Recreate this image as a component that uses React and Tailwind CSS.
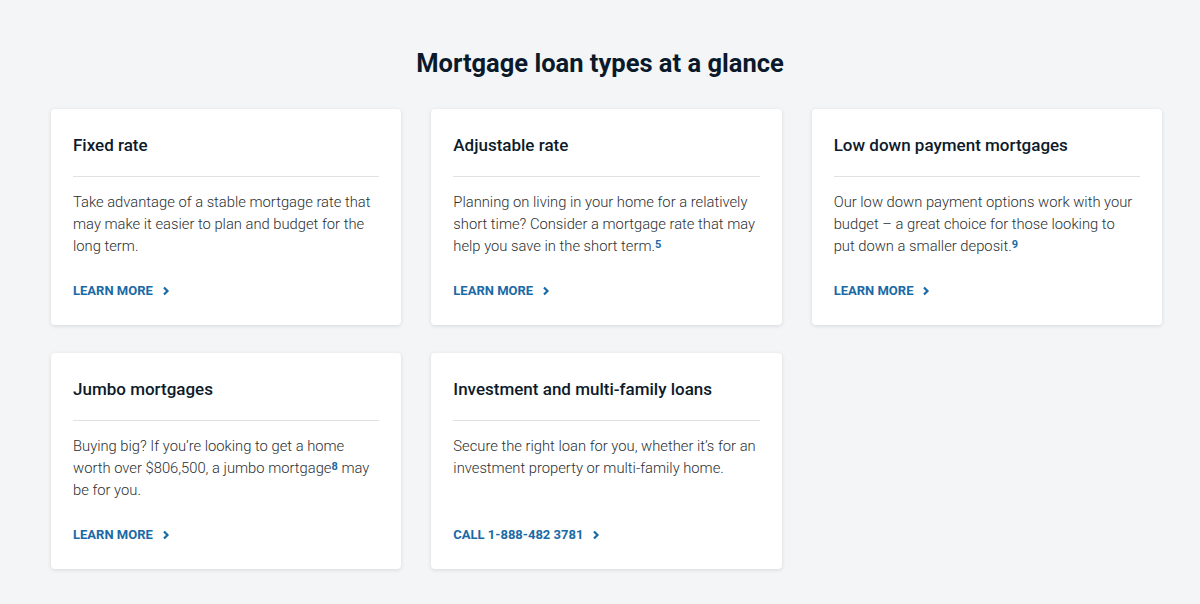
const LOANS = [
  {
    title: 'Fixed rate',
    body: 'Take advantage of a stable mortgage rate that may make it easier to plan and budget for the long term.',
    link: 'LEARN MORE',
  },
  {
    title: 'Adjustable rate',
    body: 'Planning on living in your home for a relatively short time? Consider a mortgage rate that may help you save in the short term.',
    sup: '5',
    link: 'LEARN MORE',
  },
  {
    title: 'Low down payment mortgages',
    body: 'Our low down payment options work with your budget \u2013 a great choice for those looking to put down a smaller deposit.',
    sup: '9',
    link: 'LEARN MORE',
  },
  {
    title: 'Jumbo mortgages',
    body: (
      <>
        Buying big? If you’re looking to get a home worth over $806,500, a jumbo mortgage
        <sup className="text-[11px] font-bold text-[#1a6aa6] relative -top-[3px] leading-none">8</sup> may be for you.
      </>
    ),
    link: 'LEARN MORE',
  },
  {
    title: 'Investment and multi-family loans',
    body: 'Secure the right loan for you, whether it’s for an investment property or multi-family home.',
    link: 'CALL 1-888-482 3781',
  },
]

function Chevron() {
  return (
    <svg className="w-[10px] h-[10px] ml-[8px]" viewBox="0 0 10 10" fill="none" stroke="currentColor" strokeWidth={2.2}>
      <path d="M3 1.5L6.5 5L3 8.5" />
    </svg>
  )
}

function LoanCard({ loan }) {
  return (
    <div className="flex flex-col bg-white rounded-[4px] shadow-[0_1px_4px_rgba(0,0,0,0.12)] pl-[22px] pr-[24px] pt-[24px] pb-[24px]">
      <h3 className="text-[17px] leading-[24px] font-medium text-[#0d1b2a]">{loan.title}</h3>
      <div className="h-px bg-[#dfe1e4] mt-[19px] mb-[14px] -mr-[2px]" />
      <p className="text-[14.75px] leading-[22px] font-light text-[#2b2f33]">
        {loan.body}
        {loan.sup && (
          <sup className="text-[11px] font-bold text-[#1a6aa6] relative -top-[3px] leading-none">{loan.sup}</sup>
        )}
      </p>
      <a className="mt-auto pt-[24px] flex items-center text-[13px] leading-[20px] font-bold text-[#1a6aa6]">
        {loan.link}
        <Chevron />
      </a>
    </div>
  )
}

export default function App() {
  return (
    <div className="min-h-[604px] bg-[#f4f5f7] font-['Roboto',sans-serif] pt-[45px]">
      <h2 className="text-center text-[25.5px] leading-[36px] font-bold text-[#0b1a2b]">
        Mortgage loan types at a glance
      </h2>
      <div className="grid grid-cols-3 gap-x-[30px] gap-y-[28px] w-[1111px] ml-[51px] mt-[28px]">
        {LOANS.map((loan) => (
          <LoanCard key={loan.title} loan={loan} />
        ))}
      </div>
    </div>
  )
}
